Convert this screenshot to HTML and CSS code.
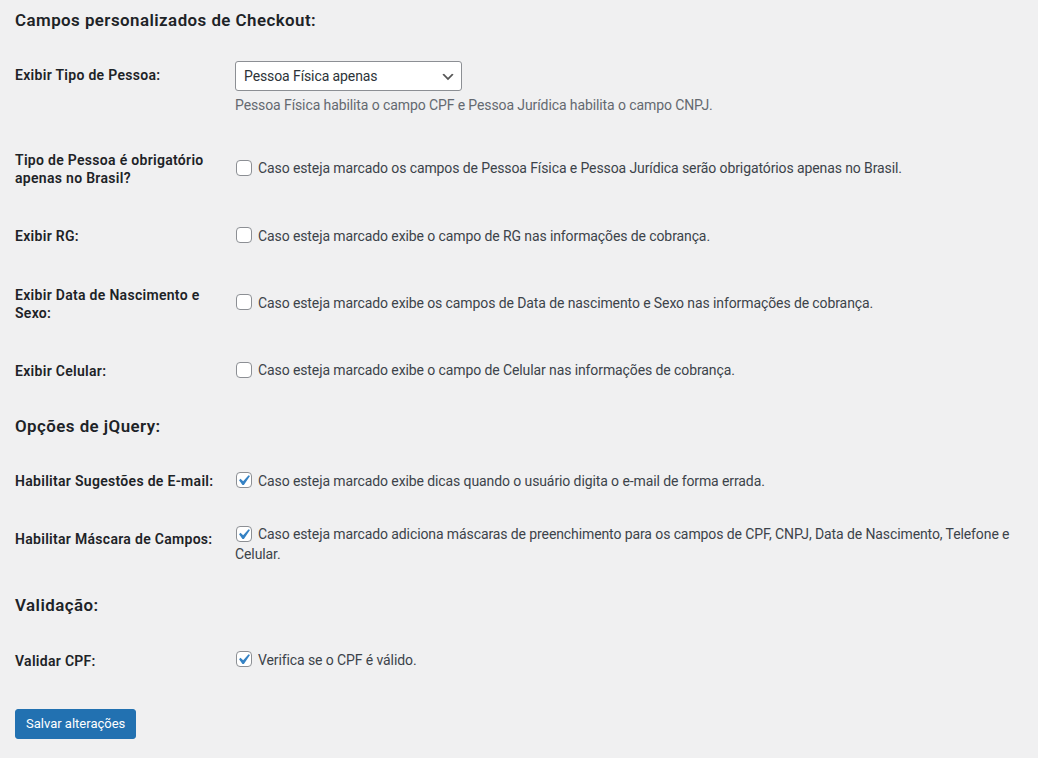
FILE: index.html
```html
<!DOCTYPE html>
<html lang="pt-BR">
<head>
<meta charset="utf-8">
<title>Configurações</title>
<link rel="stylesheet" href="styles.css">
</head>
<body>
<div class="wrap">
  <h2 class="title first">Campos personalizados de Checkout:</h2>
  <table class="form-table">
    <tr>
      <th>Exibir Tipo de Pessoa:</th>
      <td>
        <div class="select"><span>Pessoa Física apenas</span><svg class="chev" viewBox="0 0 20 20"><path d="M5 6l5 5 5-5 2 1-7 7-7-7 2-1z" fill="#555"/></svg></div>
        <p class="description">Pessoa Física habilita o campo CPF e Pessoa Jurídica habilita o campo CNPJ.</p>
      </td>
    </tr>
    <tr>
      <th>Tipo de Pessoa é obrigatório apenas no Brasil?</th>
      <td><label><span class="cb"></span>Caso esteja marcado os campos de Pessoa Física e Pessoa Jurídica serão obrigatórios apenas no Brasil.</label></td>
    </tr>
    <tr>
      <th>Exibir RG:</th>
      <td><label><span class="cb"></span>Caso esteja marcado exibe o campo de RG nas informações de cobrança.</label></td>
    </tr>
    <tr>
      <th>Exibir Data de Nascimento e Sexo:</th>
      <td><label><span class="cb"></span>Caso esteja marcado exibe os campos de Data de nascimento e Sexo nas informações de cobrança.</label></td>
    </tr>
    <tr>
      <th>Exibir Celular:</th>
      <td><label><span class="cb"></span>Caso esteja marcado exibe o campo de Celular nas informações de cobrança.</label></td>
    </tr>
  </table>

  <h2 class="title">Opções de jQuery:</h2>
  <table class="form-table">
    <tr>
      <th>Habilitar Sugestões de E-mail:</th>
      <td><label><span class="cb checked"><svg viewBox="0 0 20 20"><path d="M14.83 4.89l1.34.94-5.81 8.38H9.02L5.78 9.67l1.34-1.25 2.57 2.4z" fill="#3582c4"/></svg></span>Caso esteja marcado exibe dicas quando o usuário digita o e-mail de forma errada.</label></td>
    </tr>
    <tr>
      <th>Habilitar Máscara de Campos:</th>
      <td><label><span class="cb checked"><svg viewBox="0 0 20 20"><path d="M14.83 4.89l1.34.94-5.81 8.38H9.02L5.78 9.67l1.34-1.25 2.57 2.4z" fill="#3582c4"/></svg></span>Caso esteja marcado adiciona máscaras de preenchimento para os campos de CPF, CNPJ, Data de Nascimento, Telefone e Celular.</label></td>
    </tr>
  </table>

  <h2 class="title">Validação:</h2>
  <table class="form-table">
    <tr>
      <th>Validar CPF:</th>
      <td><label><span class="cb checked"><svg viewBox="0 0 20 20"><path d="M14.83 4.89l1.34.94-5.81 8.38H9.02L5.78 9.67l1.34-1.25 2.57 2.4z" fill="#3582c4"/></svg></span>Verifica se o CPF é válido.</label></td>
    </tr>
  </table>

  <p class="submit"><span class="button">Salvar alterações</span></p>
</div>
</body>
</html>
```

FILE: styles.css
```css
html, body {
  margin: 0;
  padding: 0;
}
body {
  background: #f0f0f1;
  color: #3c434a;
  font-family: Roboto, "Liberation Sans", sans-serif;
  font-size: 13px;
  line-height: 1.4em;
}
.wrap {
  padding: 11px 5px 0 15px;
}
h2.title {
  color: #1d2327;
  font-size: 1.3em;
  font-weight: 600;
  letter-spacing: 0.45px;
  margin: 16.9px 0;
  line-height: 18.2px;
}
h2.title.first {
  margin-top: 0;
}
.form-table {
  border-collapse: collapse;
  width: 100%;
  margin-top: 0.5em;
  clear: both;
}
.form-table th,
.form-table td {
  font-size: 14px;
  line-height: 1.3;
}
.form-table th {
  width: 200px;
  padding: 20px 10px 20px 0;
  vertical-align: top;
  text-align: left;
  font-weight: 600;
  letter-spacing: 0.3px;
  color: #1d2327;
}
.form-table td {
  padding: 15px 10px;
  vertical-align: middle;
  letter-spacing: -0.1px;
}
.form-table td label {
  line-height: 1.4;
}
.select {
  position: relative;
  display: inline-block;
  box-sizing: border-box;
  width: 227px;
  height: 30px;
  line-height: 28px;
  padding: 0 24px 0 8px;
  border: 1px solid #8c8f94;
  border-radius: 3px;
  background: #fff;
  color: #2c3338;
  font-size: 14px;
  vertical-align: middle;
}
.chev {
  position: absolute;
  right: 5px;
  top: 7px;
  width: 16px;
  height: 16px;
}
.description {
  margin: 4px 0 0;
  color: #646970;
  font-size: 14px;
  line-height: 1.5;
}
.cb {
  position: relative;
  display: inline-block;
  box-sizing: border-box;
  width: 16px;
  height: 16px;
  margin: -4px 6px 0 1px;
  border: 1px solid #8c8f94;
  border-radius: 4px;
  background: #fff;
  vertical-align: middle;
}
.cb svg {
  position: absolute;
  left: -4px;
  top: -3px;
  width: 21px;
  height: 21px;
}
p.submit {
  margin: 19px 0 0;
  padding: 0;
}
.button {
  display: inline-block;
  box-sizing: border-box;
  min-height: 30px;
  line-height: 28px;
  padding: 0 10px;
  font-size: 13px;
  color: #fff;
  background: #2271b1;
  border: 1px solid #2271b1;
  border-radius: 3px;
}
```
